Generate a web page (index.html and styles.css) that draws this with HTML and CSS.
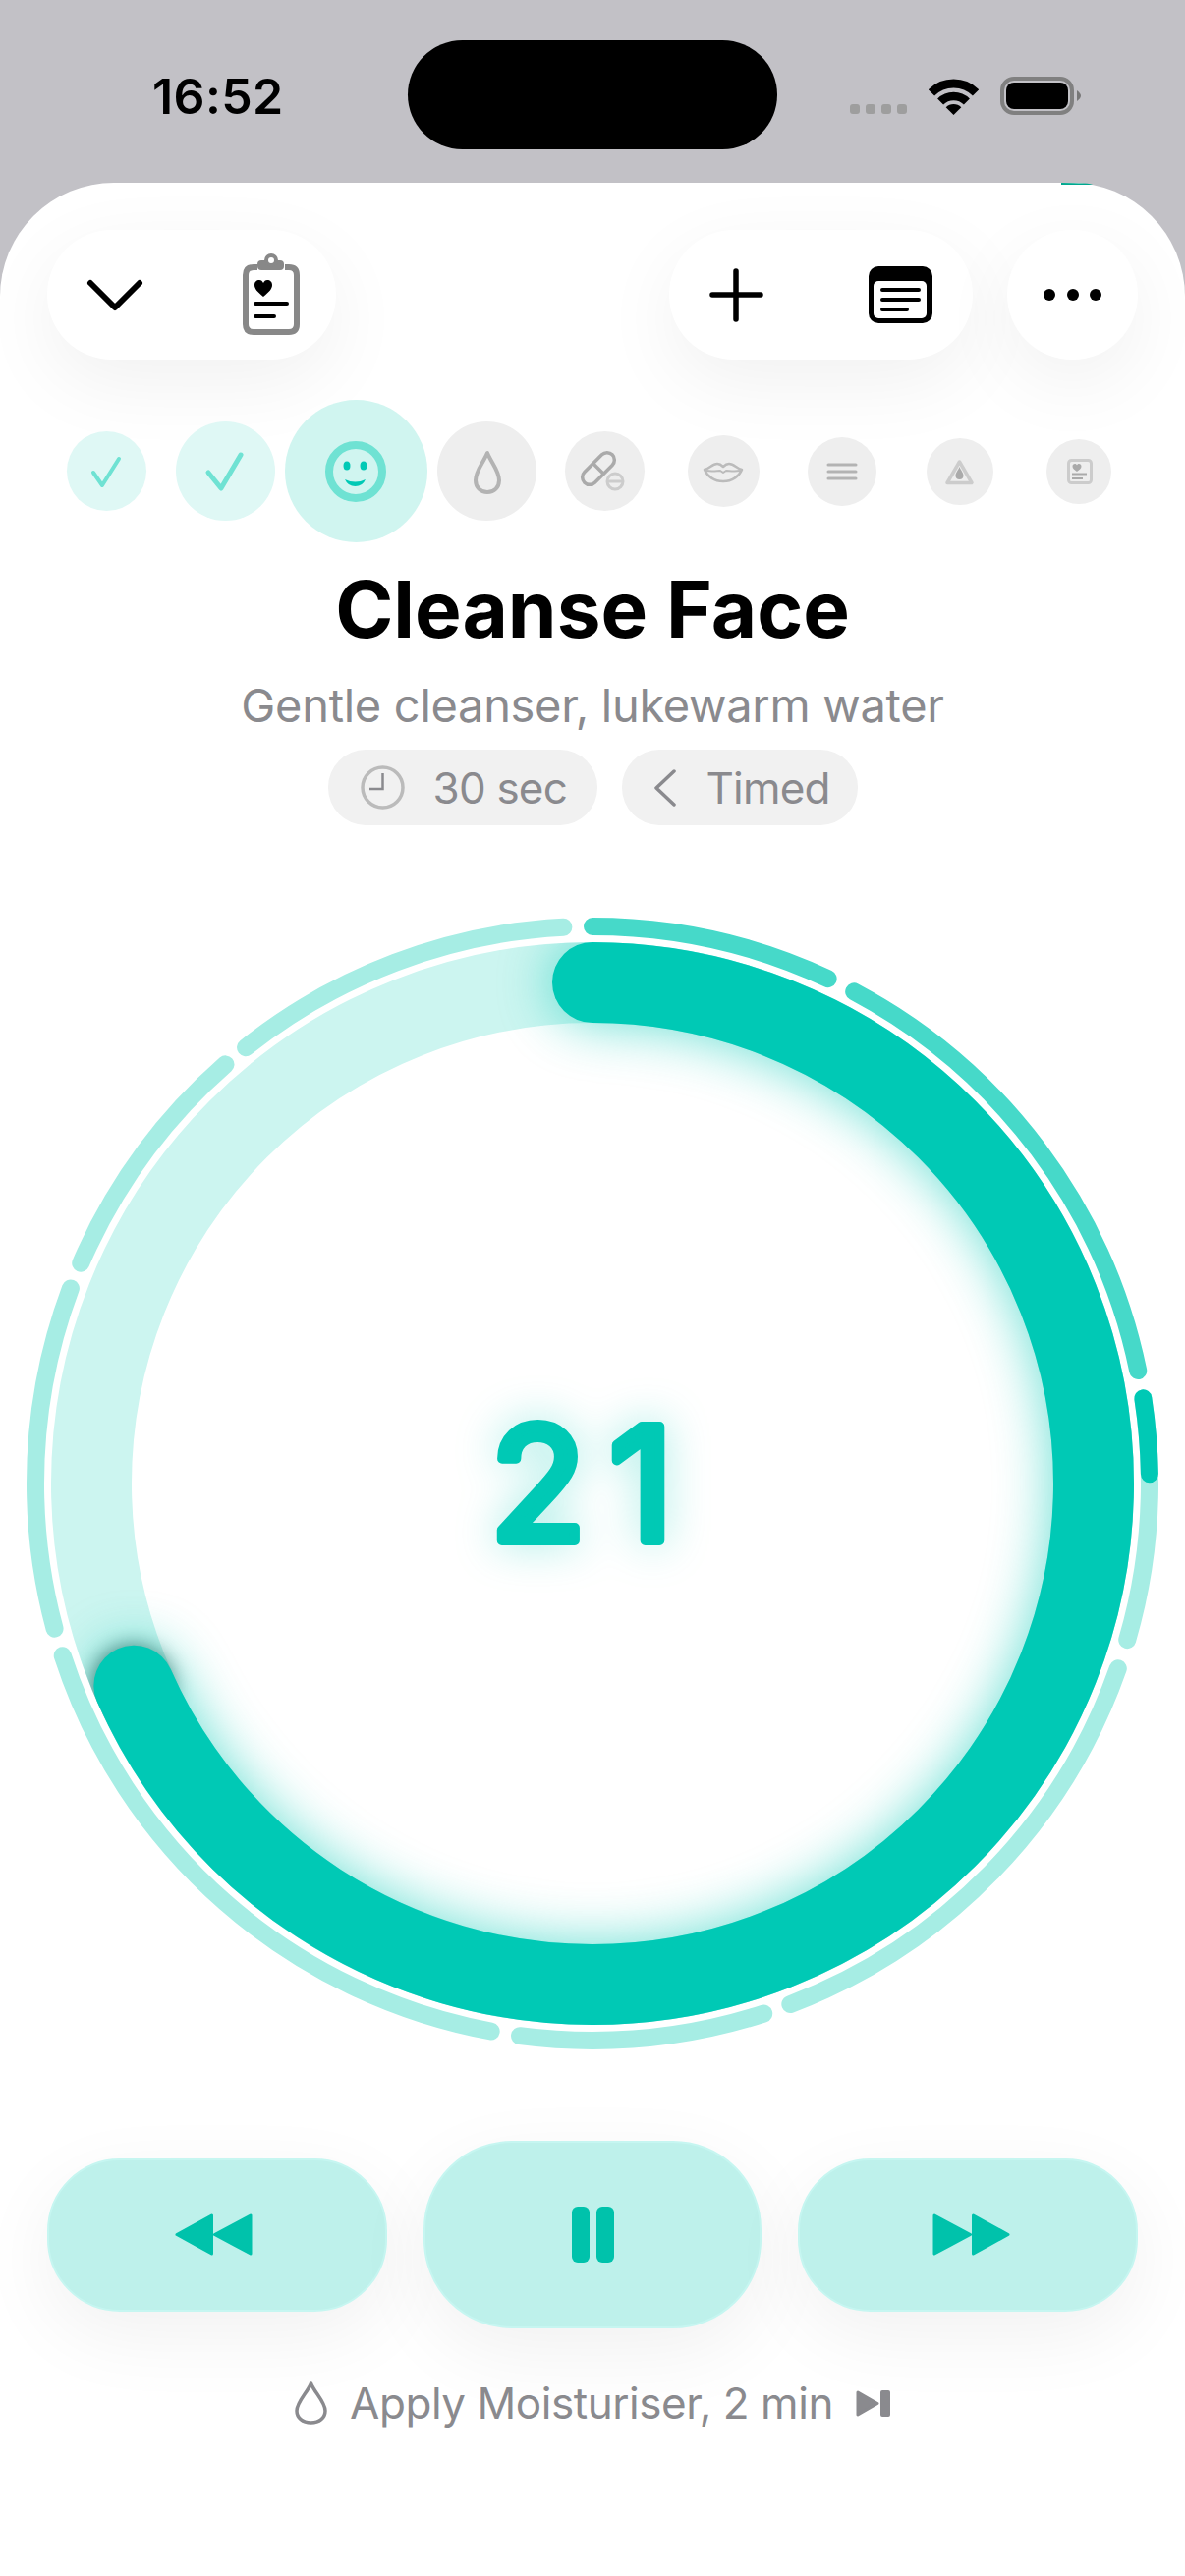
FILE: index.html
```html
<!DOCTYPE html>
<html lang="en">
<head>
    <meta charset="UTF-8">
    <meta name="viewport" content="width=device-width, initial-scale=1.0">
    <title>Cleanse Face</title>
    <link rel="stylesheet" href="styles.css">
</head>
<body>
    <div class="status">
        <span class="time">16:52</span>
        <div class="island"></div>
        <div class="status-icons">
            <div class="signal"><i></i><i></i><i></i><i></i></div>
            <svg class="wifi" width="51" height="37" viewBox="0 0 51 37">
                <path d="M2.9 14.4A32 32 0 0 1 48.1 14.4" fill="none" stroke="#000" stroke-width="9"/>
                <path d="M12.1 23.6A19 19 0 0 1 38.9 23.6" fill="none" stroke="#000" stroke-width="8.5"/>
                <path d="M25.5 37L17.7 29.2A11 11 0 0 1 33.3 29.2Z"/>
            </svg>
            <svg width="82" height="39" viewBox="0 0 82 39">
                <rect x="2" y="2" width="71" height="35" rx="12" fill="none" stroke="#808080" stroke-width="4"/>
                <rect x="6" y="6" width="63" height="27" rx="8"/>
                <path d="M78 14Q82 17 82 19.5Q82 22 78 25Z" fill="#777"/>
            </svg>
        </div>
    </div>

    <div class="sheet">
        <div class="sliver"></div>

        <div class="topbar">
            <div class="float-btn pill-left">
                <svg width="60" height="40" viewBox="0 0 60 40">
                    <path d="M5 8L30 33L55 8" fill="none" stroke="#000" stroke-width="6" stroke-linecap="round" stroke-linejoin="round"/>
                </svg>
                <svg width="64" height="88" viewBox="0 0 64 88">
                    <path d="M18 16H14Q6 16 6 24V74Q6 82 14 82H50Q58 82 58 74V24Q58 16 50 16H46" fill="none" stroke="#888" stroke-width="6"/>
                    <rect x="18" y="9" width="27" height="10" rx="4" fill="#888"/>
                    <circle cx="32" cy="9" r="5" fill="#fff" stroke="#888" stroke-width="4"/>
                    <path d="M24 46C18 41 15 38 15 34C15 31 17 29 20 29C22 29 23 30 24 32C25 30 26 29 28 29C31 29 33 31 33 34C33 38 30 41 24 46Z"/>
                    <path d="M16 53H48M16 66H35" stroke="#000" stroke-width="4" stroke-linecap="round"/>
                </svg>
            </div>
            <div class="topbar-right">
                <div class="float-btn pill-right">
                    <svg width="56" height="56" viewBox="0 0 56 56">
                        <path d="M28 4V53M4 28H53" stroke="#000" stroke-width="5.5" stroke-linecap="round"/>
                    </svg>
                    <svg width="65" height="58" viewBox="0 0 65 58">
                        <rect width="65" height="58" rx="10"/>
                        <rect x="5" y="15" width="54" height="38" rx="5" fill="#fff"/>
                        <path d="M14 24H51M14 34H51M14 44H39" stroke="#000" stroke-width="4" stroke-linecap="round"/>
                    </svg>
                </div>
                <div class="float-btn circle-btn">
                    <svg width="60" height="12" viewBox="0 0 60 12">
                        <circle cx="6" cy="6" r="6"/><circle cx="30" cy="6" r="6"/><circle cx="53" cy="6" r="6"/>
                    </svg>
                </div>
            </div>
        </div>

        <div class="steps">
            <div class="step"><div class="dot dot-done size-81">
                <svg width="81" height="81" viewBox="0 0 81 81"><path d="M27 42L36 55L53 28" fill="none" stroke="#6fe2d3" stroke-width="4" stroke-linecap="round" stroke-linejoin="round"/></svg>
            </div></div>
            <div class="step"><div class="dot dot-done size-101">
                <svg width="101" height="101" viewBox="0 0 101 101"><path d="M33 52L46 68L66 34" fill="none" stroke="#6fe2d3" stroke-width="5" stroke-linecap="round" stroke-linejoin="round"/></svg>
            </div></div>
            <div class="step step-current"><div class="dot dot-current size-145">
                <svg width="145" height="145" viewBox="0 0 145 145">
                    <circle cx="72" cy="73" r="27" fill="none" stroke="#6fe2d3" stroke-width="8"/>
                    <ellipse cx="63" cy="67" rx="3.5" ry="4.5" fill="#00c9b5"/>
                    <ellipse cx="80" cy="67" rx="3.5" ry="4.5" fill="#00c9b5"/>
                    <path d="M61 81Q71.5 86 82 81Q79 88 71.5 88Q64 88 61 81Z" fill="#00c9b5"/>
                </svg>
            </div></div>
            <div class="step"><div class="dot size-101">
                <svg width="101" height="101" viewBox="0 0 101 101"><path d="M51 32C47 42 39 50 39 60C39 67 44 72 51 72C58 72 63 67 63 60C63 50 55 42 51 32Z" fill="none" stroke="#b3b3b3" stroke-width="4" stroke-linejoin="round"/></svg>
            </div></div>
            <div class="step"><div class="dot size-81">
                <svg width="81" height="81" viewBox="0 0 81 81">
                    <g transform="translate(34 38) rotate(-45)" fill="none" stroke="#aaa" stroke-width="3.5">
                        <rect x="-20" y="-7.5" width="40" height="15" rx="7.5"/>
                        <path d="M0 -7.5V7.5"/>
                    </g>
                    <circle cx="51" cy="51" r="8" fill="none" stroke="#ccc" stroke-width="3"/>
                    <path d="M43 51H59" stroke="#ccc" stroke-width="3"/>
                </svg>
            </div></div>
            <div class="step"><div class="dot size-73">
                <svg width="73" height="73" viewBox="0 0 73 73" fill="none" stroke="#bbb" stroke-width="2.5" stroke-linejoin="round">
                    <path d="M17 35C22 34 25 29 30 29C33 29 35 31 36 32C37 31 39 29 42 29C47 29 50 34 55 35C52 42 45 47 36 47C27 47 20 42 17 35Z"/>
                    <path d="M19 36C25 37 30 36 33 36L36 38L39 36C42 36 47 37 53 36" stroke-width="2"/>
                </svg>
            </div></div>
            <div class="step"><div class="dot size-70">
                <svg width="70" height="70" viewBox="0 0 70 70"><path d="M21 28H49M21 35H49M21 42H49" stroke="#b3b3b3" stroke-width="3" stroke-linecap="round"/></svg>
            </div></div>
            <div class="step"><div class="dot size-68">
                <svg width="68" height="68" viewBox="0 0 68 68">
                    <path d="M33.5 24L46 45.5H21Z" fill="none" stroke="#ccc" stroke-width="3.5" stroke-linejoin="round"/>
                    <path d="M33.5 29C32 33 29.5 35 29.5 38C29.5 40.5 31 42 33.5 42C36 42 37.5 40.5 37.5 38C37.5 35 35 33 33.5 29Z" fill="#aaa"/>
                </svg>
            </div></div>
            <div class="step"><div class="dot size-66">
                <svg width="66" height="66" viewBox="0 0 66 66">
                    <rect x="22.5" y="21.5" width="23" height="23" rx="3" fill="none" stroke="#ccc" stroke-width="3"/>
                    <path d="M31 33C28 31 26.5 29.5 26.5 27.5C26.5 26 27.5 25 29 25C30 25 30.5 25.5 31 26.5C31.5 25.5 32 25 33 25C34.5 25 35.5 26 35.5 27.5C35.5 29.5 34 31 31 33Z" fill="#aaa"/>
                    <path d="M26 35.5H41M26 40H37" stroke="#aaa" stroke-width="2"/>
                </svg>
            </div></div>
        </div>

        <h1 class="title">Cleanse Face</h1>
        <p class="subtitle">Gentle cleanser, lukewarm water</p>
        <div class="chips">
            <div class="chip chip-time">
                <svg width="45" height="45" viewBox="0 0 45 45">
                    <circle cx="22.5" cy="22.5" r="20.5" fill="none" stroke="#bbb" stroke-width="3.5"/>
                    <path d="M22.5 8V24H9" fill="none" stroke="#8a8a8e" stroke-width="2.5"/>
                </svg>
                <span>30 sec</span>
            </div>
            <div class="chip chip-mode">
                <svg width="24" height="38" viewBox="0 0 24 38">
                    <path d="M21 2L3 19L21 36" fill="none" stroke="#8a8a8e" stroke-width="3.5" stroke-linecap="round" stroke-linejoin="round"/>
                </svg>
                <span>Timed</span>
            </div>
        </div>

        <svg class="ring" width="1206" height="1206" viewBox="0 0 1206 1206">
            <defs>
                <clipPath id="ring-clip"><circle cx="603" cy="603" r="551"/></clipPath>
            </defs>
            <g transform="rotate(-90 603 603)">
                <circle class="track" cx="603" cy="603" r="510"/>

                <!-- step segments, angles are clockwise from the top -->
                <circle class="seg seg-done" cx="603" cy="603" r="567" pathLength="360" stroke-dasharray="25 360" stroke-dashoffset="0"/>
                <circle class="seg seg-done" cx="603" cy="603" r="567" pathLength="360" stroke-dasharray="50.3 360" stroke-dashoffset="-28"/>
                <circle class="seg" cx="603" cy="603" r="567" pathLength="360" stroke-dasharray="25.1 360" stroke-dashoffset="-81.2"/>
                <circle class="seg seg-now" cx="603" cy="603" r="567" pathLength="360" stroke-dasharray="7.8 360" stroke-dashoffset="-81.2"/>
                <circle class="seg" cx="603" cy="603" r="567" pathLength="360" stroke-dasharray="49.8 360" stroke-dashoffset="-109.4"/>
                <circle class="seg" cx="603" cy="603" r="567" pathLength="360" stroke-dasharray="25.4 360" stroke-dashoffset="-162.1"/>
                <circle class="seg" cx="603" cy="603" r="567" pathLength="360" stroke-dasharray="61.5 360" stroke-dashoffset="-190.5"/>
                <circle class="seg" cx="603" cy="603" r="567" pathLength="360" stroke-dasharray="35.6 360" stroke-dashoffset="-254.9"/>
                <circle class="seg" cx="603" cy="603" r="567" pathLength="360" stroke-dasharray="25.5 360" stroke-dashoffset="-293.3"/>
                <circle class="seg" cx="603" cy="603" r="567" pathLength="360" stroke-dasharray="35.5 360" stroke-dashoffset="-321.5"/>
            </g>
            <g clip-path="url(#ring-clip)">
                <circle class="cap-shadow" cx="135" cy="809" r="41"/>
                <circle class="glow" cx="603" cy="603" r="510" pathLength="360" stroke-dasharray="246.2 360" transform="rotate(-90 603 603)"/>
            </g>
            <circle class="progress" cx="603" cy="603" r="510" pathLength="360" stroke-dasharray="246.2 360" transform="rotate(-90 603 603)"/>
            <text class="count" x="604" y="661">21</text>
        </svg>

        <div class="controls">
            <div class="ctrl ctrl-back">
                <svg width="81" height="45" viewBox="0 0 81 45">
                    <path d="M3 22.5L38.5 3V42ZM41.5 22.5L78 3V42Z" fill="#00c2ab" stroke="#00c2ab" stroke-width="3" stroke-linejoin="round"/>
                </svg>
            </div>
            <div class="ctrl ctrl-main">
                <svg width="43" height="57" viewBox="0 0 43 57">
                    <rect width="18" height="57" rx="6" fill="#00c2ab"/>
                    <rect x="25" width="18" height="57" rx="6" fill="#00c2ab"/>
                </svg>
            </div>
            <div class="ctrl ctrl-forward">
                <svg width="81" height="45" viewBox="0 0 81 45">
                    <path d="M3 3L39.5 22.5L3 42ZM42.5 3L78 22.5L42.5 42Z" fill="#00c2ab" stroke="#00c2ab" stroke-width="3" stroke-linejoin="round"/>
                </svg>
            </div>
        </div>

        <div class="next">
            <svg width="33" height="44" viewBox="0 0 33 44">
                <path d="M16.5 2C13 11 2 21 2 30C2 37 8 42 16.5 42C25 42 31 37 31 30C31 21 20 11 16.5 2Z" fill="none" stroke="#8a8a8e" stroke-width="3.5" stroke-linejoin="round"/>
            </svg>
            <span>Apply Moisturiser, 2 min</span>
            <svg width="35" height="27" viewBox="0 0 35 27">
                <path d="M2 2L22 13.5L2 25Z" fill="#8a8a8e" stroke="#8a8a8e" stroke-width="3" stroke-linejoin="round"/>
                <rect x="25" width="10" height="27" rx="2" fill="#8a8a8e"/>
            </svg>
        </div>
    </div>
</body>
</html>
```
FILE: styles.css
```css
* {
    box-sizing: border-box;
}
body {
    font-family: Inter, "Liberation Sans", sans-serif;
    background: #c2c1c6;
    color: #000;
    margin: 0;
    width: 1206px;
    height: 2622px;
    overflow: hidden;
}
svg {
    display: block;
    flex-shrink: 0;
}

/* status bar */
.status {
    display: flex;
    align-items: center;
    height: 186px;
    padding: 41px 0 34px 155px;
}
.time {
    width: 260px;
    font-size: 50px;
    font-weight: 600;
    letter-spacing: 0.4px;
    margin-top: 3px;
}
.island {
    width: 376px;
    height: 111px;
    background: #000;
    border-radius: 56px;
}
.status-icons {
    display: flex;
    align-items: flex-end;
    gap: 22px;
    margin-left: 74px;
    margin-top: 2px;
}
.signal {
    display: flex;
    gap: 6px;
    margin-bottom: 1px;
}
.signal i {
    width: 10px;
    height: 10px;
    border-radius: 3px;
    background: #9e9e9e;
}

/* sheet */
.sheet {
    position: relative;
    height: 2436px;
    background: #fff;
    border-radius: 116px 116px 0 0;
    padding-top: 48px;
}
.sliver {
    position: absolute;
    top: 0;
    left: 1080px;
    width: 32px;
    height: 2px;
    background: #00a88f;
    border-radius: 0 100% 0 0;
}
.topbar {
    display: flex;
    justify-content: space-between;
    padding: 0 48px;
}
.topbar-right {
    display: flex;
    gap: 35px;
}
.float-btn {
    display: flex;
    align-items: center;
    height: 132px;
    background: #fff;
    border-radius: 66px;
    box-shadow: 0 24px 80px rgba(0, 0, 0, 0.06);
}
.pill-left {
    width: 294px;
    padding-left: 39px;
    gap: 97px;
}
.pill-right {
    width: 309px;
    padding-left: 40px;
    gap: 107px;
}
.circle-btn {
    width: 133px;
    justify-content: center;
}

/* step row */
.steps {
    display: flex;
    justify-content: center;
    align-items: center;
    height: 145px;
    margin-top: 41px;
    padding-left: 1px;
}
.step {
    display: flex;
    justify-content: center;
    flex: 0 0 120.6px;
}
.step-current {
    flex-basis: 144px;
}
.dot {
    border-radius: 50%;
    background: #eeeeee;
}
.dot-done {
    background: #dff8f5;
}
.dot-current {
    background: #d0f5f0;
}
.size-145 { width: 145px; height: 145px; }
.size-101 { width: 101px; height: 101px; }
.size-81 { width: 81px; height: 81px; }
.size-73 { width: 73px; height: 73px; }
.size-70 { width: 70px; height: 70px; }
.size-68 { width: 68px; height: 68px; }
.size-66 { width: 66px; height: 66px; }

/* heading */
.title {
    margin: 20px 0 0;
    font-size: 80px;
    font-weight: 700;
    line-height: 96px;
    text-align: center;
}
.subtitle {
    margin: 21px 0 0;
    font-size: 47px;
    letter-spacing: -0.3px;
    line-height: 57px;
    color: #8a8a8e;
    text-align: center;
}
.chips {
    display: flex;
    justify-content: center;
    gap: 25px;
    margin-top: 17px;
}
.chip {
    display: flex;
    align-items: center;
    height: 77px;
    border-radius: 38px;
    background: #f1f1f1;
    font-size: 44px;
    letter-spacing: -0.8px;
    color: #8a8a8e;
}
.chip-time {
    width: 274px;
    padding-left: 33px;
    gap: 29px;
}
.chip-mode {
    width: 240px;
    padding-left: 32px;
    gap: 30px;
}

/* timer ring */
.ring {
    margin-top: 67px;
}
.track {
    fill: none;
    stroke: #ccf5f0;
    stroke-width: 82;
}
.seg {
    fill: none;
    stroke: #a6ede4;
    stroke-width: 18;
    stroke-linecap: round;
}
.seg-done {
    stroke: #46d9c9;
}
.seg-now {
    stroke: #00c9b5;
}
.cap-shadow {
    fill: #000;
    opacity: 0.55;
    filter: blur(10px);
}
.glow {
    fill: none;
    stroke: #00c9b5;
    stroke-width: 82;
    stroke-linecap: round;
    opacity: 0.6;
    filter: blur(28px);
}
.progress {
    fill: none;
    stroke: #00c9b5;
    stroke-width: 82;
    stroke-linecap: round;
}
.count {
    font-size: 160px;
    font-weight: 400;
    letter-spacing: 24px;
    text-anchor: middle;
    fill: #00c9b5;
    stroke: #00c9b5;
    stroke-width: 10;
    stroke-linejoin: round;
    filter: drop-shadow(0 0 22px rgba(0, 201, 181, 0.35));
}

/* player controls */
.controls {
    display: flex;
    align-items: center;
    gap: 37px;
    margin-top: 66px;
    padding: 0 48px;
}
.ctrl {
    display: flex;
    align-items: center;
    justify-content: center;
    width: 346px;
    height: 156px;
    border: 2px solid #c6f6f1;
    border-radius: 74px;
    background: #bef1eb;
    box-shadow: 0 24px 80px rgba(0, 0, 0, 0.06);
}
.ctrl-back {
    padding-right: 7px;
}
.ctrl-forward {
    padding-left: 7px;
}
.ctrl-main {
    width: 344px;
    height: 191px;
    border-radius: 90px;
}
.next {
    display: flex;
    justify-content: center;
    align-items: center;
    gap: 23px;
    margin-top: 49px;
    font-size: 44px;
    letter-spacing: -0.45px;
    line-height: 54px;
    color: #8a8a8e;
}
```
